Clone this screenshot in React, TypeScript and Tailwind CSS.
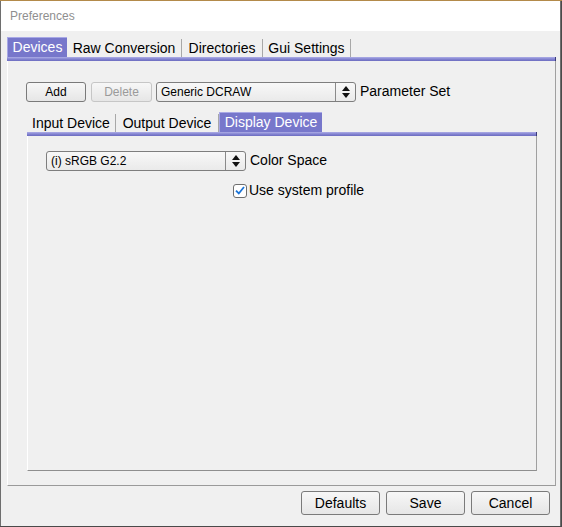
import React from "react";

const font = { fontFamily: '"Liberation Sans", Arial, sans-serif' };

function Spinner(): JSX.Element {
  return (
    <div className="flex h-full w-[20px] flex-col items-center justify-center gap-[2px] border-l border-[#8a8a8a]">
      <svg width="8" height="5" viewBox="0 0 8 5"><path d="M4 0L8 5H0z" fill="#111" /></svg>
      <svg width="8" height="5" viewBox="0 0 8 5"><path d="M0 0H8L4 5z" fill="#111" /></svg>
    </div>
  );
}

function Combo({ value, width }: { value: string; width: string }): JSX.Element {
  return (
    <div className={`flex h-[20px] ${width} items-center rounded-[3px] border border-[#7e7e7e] bg-gradient-to-b from-[#f8f8f8] to-[#eaeaea]`}>
      <span className="flex-1 pl-[4px] text-[12px] text-black">{value}</span>
      <Spinner />
    </div>
  );
}

function TabStrip({ tabs, active }: { tabs: { label: string; w: string }[]; active: number }): JSX.Element {
  return (
    <div className="flex h-[20px] items-end">
      {tabs.map((t, i) =>
        i === active ? (
          <div key={t.label} className={`${t.w} flex h-[20px] items-center justify-center border-t border-l border-[#a9a9e6] bg-[#7777cb] text-[14px] text-white`}>
            {t.label}
          </div>
        ) : (
          <div key={t.label} className={`${t.w} flex h-[18px] items-center justify-center border-r border-[#a8a8a8] text-[14px] text-black`}>
            {t.label}
          </div>
        )
      )}
    </div>
  );
}

function TabBar(): JSX.Element {
  return <div className="h-[4px] border-r border-[#3a3a7a] bg-gradient-to-b from-[#aeaee6] via-[#8585d2] to-[#6c6cc0]" />;
}

function Button({ label, className, disabled }: { label: string; className: string; disabled?: boolean }): JSX.Element {
  return (
    <div
      className={`${className} flex items-center justify-center rounded-[3px] border ${
        disabled ? "border-[#c6c6c6] text-[#9a9a9a]" : "border-[#7a7a7a] text-black"
      } bg-gradient-to-b from-[#f7f7f7] to-[#e6e6e6]`}
    >
      {label}
    </div>
  );
}

export default function App(): JSX.Element {
  return (
    <div className="h-[527px] w-[562px] bg-[#4a4a4a]" style={font}>
      <div className="h-[1px] bg-[#b38a4a]" />
      <div className="flex h-[525px] w-[561px] flex-col border-l border-r border-[#6e6e6e] bg-[#f0f0f0]">
        <div className="flex h-[30px] items-center bg-white pl-[9px] text-[12px] text-[#8f8f8f]">Preferences</div>

        <div className="flex flex-col pl-[6px] pr-[4px] pt-[6px]">
          <TabStrip
            active={0}
            tabs={[
              { label: "Devices", w: "w-[60px]" },
              { label: "Raw Conversion", w: "w-[115px]" },
              { label: "Directories", w: "w-[81px]" },
              { label: "Gui Settings", w: "w-[88px]" },
            ]}
          />
          <TabBar />
          <div className="flex h-[425px] flex-col border-l border-r border-b border-l-white border-r-[#a0a0a0] border-b-[#9a9a9a] pl-[18px] pr-[18px] pt-[20px]">
            <div className="flex items-center">
              <Button label="Add" className="h-[20px] w-[60px] text-[12px]" />
              <Button label="Delete" disabled className="ml-[5px] h-[20px] w-[61px] text-[12px]" />
              <div className="ml-[4px]">
                <Combo value="Generic DCRAW" width="w-[200px]" />
              </div>
              <span className="ml-[4px] text-[14px] text-black">Parameter Set</span>
            </div>

            <div className="mt-[10px] pl-[1px]">
              <TabStrip
                active={2}
                tabs={[
                  { label: "Input Device", w: "w-[89px]" },
                  { label: "Output Device", w: "w-[103px]" },
                  { label: "Display Device", w: "w-[103px]" },
                ]}
              />
              <TabBar />
              <div className="flex h-[335px] flex-col border-l border-r border-b border-l-white border-r-[#a0a0a0] border-b-[#8e8e8e] pl-[18px] pt-[14px]">
                <div className="flex items-center">
                  <Combo value="(i) sRGB G2.2" width="w-[200px]" />
                  <span className="ml-[4px] text-[14px] text-black">Color Space</span>
                </div>
                <div className="ml-[187px] mt-[9px] flex items-center">
                  <div className="flex h-[14px] w-[14px] items-center justify-center rounded-[3px] border border-[#6e6e6e] bg-white">
                    <svg width="10" height="9" viewBox="0 0 10 9">
                      <path d="M1 4.6L3.8 7.5L9 1" fill="none" stroke="#1a74d8" strokeWidth="1.8" />
                    </svg>
                  </div>
                  <span className="ml-[2px] text-[14px] text-black">Use system profile</span>
                </div>
              </div>
            </div>
          </div>
        </div>

        <div className="flex justify-end gap-[6px] pr-[10px] pt-[5px]">
          <Button label="Defaults" className="h-[24px] w-[79px] text-[14px]" />
          <Button label="Save" className="h-[24px] w-[79px] text-[14px]" />
          <Button label="Cancel" className="h-[24px] w-[79px] text-[14px]" />
        </div>
      </div>
    </div>
  );
}
